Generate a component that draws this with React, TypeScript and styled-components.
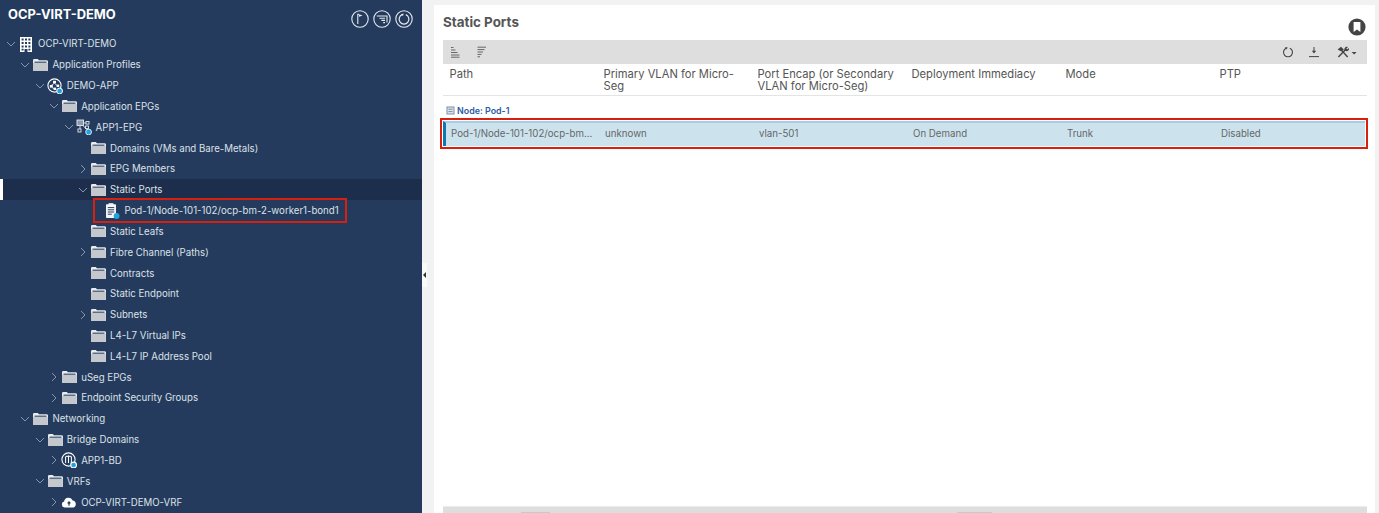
import React from "react";
import styled, { createGlobalStyle } from "styled-components";

const GlobalStyle = createGlobalStyle`
  html, body { margin: 0; padding: 0; height: 100%; overflow: hidden; }
  body { font-family: "Inter", "Liberation Sans", sans-serif; background: #f2f2f2; }
`;

const Page = styled.div`
  display: flex;
  width: 1379px;
  height: 513px;
  overflow: hidden;
`;

/* Sidebar */
const Sidebar = styled.aside`
  width: 422px;
  flex: none;
  background: #243b5e;
  overflow: hidden;
`;

const SidebarHead = styled.header`
  display: flex;
  justify-content: space-between;
  height: 33.5px;
  padding: 0 9px 0 8px;
`;

const SidebarTitle = styled.h2`
  margin: 7px 0 0;
  font-size: 12.9px;
  line-height: 16px;
  font-weight: 700;
  color: #fff;
`;

const HeadIcons = styled.div`
  display: flex;
  gap: 4px;
  padding-top: 10px;
  height: 18px;
`;

const Row = styled.div<{ $level: number; $selected?: boolean }>`
  position: relative;
  display: flex;
  align-items: center;
  height: 20.83px;
  padding-left: ${(p) => 4 + p.$level * 14.4}px;
  background: ${(p) => (p.$selected ? "#1c2e4c" : "transparent")};
  box-shadow: ${(p) => (p.$selected ? "inset 3px 0 0 #fff" : "none")};
`;

const Chevron = styled.span`
  display: flex;
  align-items: center;
  justify-content: center;
  flex: none;
  width: 14px;
`;

const NodeIcon = styled.span`
  display: flex;
  align-items: center;
  justify-content: center;
  flex: none;
  width: 16px;
  height: 16px;
`;

const NodeLabel = styled.span`
  margin-left: 4px;
  font-size: 9.66px;
  color: #dde1e7;
  white-space: nowrap;
`;

const RedFrame = styled.div`
  position: absolute;
  left: 93px;
  top: -2px;
  width: 254px;
  height: 25px;
  box-sizing: border-box;
  border: 2px solid #d8200f;
`;

/* Splitter between the tree and the panel */
const Splitter = styled.div`
  position: relative;
  width: 12px;
  flex: none;
  background: #f2f2f2;
`;

const SplitHandle = styled.div`
  position: absolute;
  left: 0;
  top: 263px;
  width: 5px;
  height: 24px;
  background: #fafafa;
  display: flex;
  align-items: center;
  justify-content: center;

  &::after {
    content: "";
    border-top: 3px solid transparent;
    border-bottom: 3px solid transparent;
    border-right: 3px solid #333;
  }
`;

/* Right panel */
const Panel = styled.main`
  display: flex;
  flex-direction: column;
  width: 941px;
  flex: none;
  margin-top: 5px;
  padding: 0 8px 0 9px;
  box-sizing: border-box;
  background: #fff;
`;

const PanelHead = styled.div`
  position: relative;
  height: 35px;
`;

const PanelTitle = styled.h1`
  margin: 0;
  padding-top: 9px;
  font-size: 13.4px;
  line-height: 16px;
  font-weight: 700;
  color: #555;
`;

const Bookmark = styled.span`
  position: absolute;
  right: 1px;
  top: 13px;
  display: flex;
`;

const Toolbar = styled.div`
  display: flex;
  align-items: center;
  justify-content: space-between;
  height: 24px;
  padding: 0 9px 0 7px;
  background: #dedede;
`;

const ToolGroup = styled.div<{ $gap: number }>`
  display: flex;
  align-items: center;
  gap: ${(p) => p.$gap}px;
`;

const Columns = styled.div`
  display: grid;
  grid-template-columns: repeat(6, 154px);
`;

const HeadRow = styled(Columns)`
  height: 32px;
  box-sizing: border-box;
  padding: 4px 0 0 6.5px;
  border-bottom: 1px solid #e4e4e4;
`;

const HeadCell = styled.div`
  padding-right: 6px;
  font-size: 11.2px;
  line-height: 12px;
  color: #555;
`;

const GroupLabel = styled.div`
  display: flex;
  align-items: center;
  gap: 2px;
  height: 25px;
  box-sizing: border-box;
  padding: 4px 0 0 3px;
  font-size: 8.9px;
  font-weight: 600;
  color: #2c5ba3;
`;

const DataRow = styled(Columns)`
  align-items: center;
  height: 25px;
  margin-right: 2px;
  box-sizing: border-box;
  padding: 0 0 2px 5px;
  border-left: 3px solid #0d78b3;
  border-top: 2px solid #a9cbe3;
  background: #cce3ee;
  outline: 2px solid #d8200f;
  outline-offset: 1px;
`;

const DataCell = styled.div`
  font-size: 9.7px;
  color: #666;
  white-space: nowrap;
`;

const ScrollTrack = styled.div`
  position: relative;
  margin-top: auto;
  height: 6px;
  border-top: 1px solid #ececec;
  background: #dedede;
`;

const ScrollThumb = styled.span<{ $left: number; $width: number }>`
  position: absolute;
  bottom: 0;
  left: ${(p) => p.$left}px;
  width: ${(p) => p.$width}px;
  height: 1px;
  background: #c8c8c8;
`;

/* Icons */
const ChevronIcon = ({ open }: { open: boolean }) => (
  <svg width="10" height="10" viewBox="0 0 10 10" fill="none" stroke="#8795aa" strokeWidth="1">
    <path d={open ? "M1 3l4 4 4-4" : "M3 1l4 4-4 4"} />
  </svg>
);

const Badge = () => <circle cx="12.6" cy="13" r="2.9" fill="#23a3dc" />;

const FolderIcon = () => (
  <svg width="16" height="14" viewBox="0 0 16 14">
    <path d="M1 2.4C1 1.6 1.5 1 2.2 1h3.6l1.2 1.3h7.6c.8 0 1.4.6 1.4 1.3V13H1z" fill="#e9ebee" />
    <rect x="1" y="5" width="14.8" height="8" fill="#c4c7cc" />
    <rect x="2.5" y="3.6" width="12" height="1.2" fill="#39506f" />
  </svg>
);

const BuildingIcon = () => (
  <svg width="14" height="16" viewBox="0 0 14 16">
    <path
      fillRule="evenodd"
      fill="#fff"
      d="M1 1h12v15H8.5v-3h-3v3H1zM2.6 2.6v2h2v-2zm3.4 0v2h2v-2zm3.4 0v2h2v-2zM2.6 6v2h2V6zM6 6v2h2V6zm3.4 0v2h2V6zM2.6 9.4v2h2v-2zM6 9.4v2h2v-2zm3.4 0v2h2v-2zM2.6 12.8v1.6h2v-1.6zm6.8 0v1.6h2v-1.6z"
    />
  </svg>
);

const AppIcon = () => (
  <svg width="16" height="16" viewBox="0 0 16 16" fill="none" stroke="#fff">
    <circle cx="7.5" cy="7.5" r="6.6" strokeWidth="1.1" />
    <rect x="6" y="2.8" width="3" height="2.6" fill="#fff" stroke="none" />
    <rect x="2.8" y="7" width="3" height="2.6" fill="#fff" stroke="none" />
    <rect x="6.6" y="9.6" width="2.6" height="2.4" fill="#fff" stroke="none" />
    <path d="M7.5 5.4L4.5 7M7.5 5.4l3 2.4M5 9.6l2 1" strokeWidth="0.7" />
    <rect x="9.6" y="6.6" width="2.6" height="2.4" fill="#fff" stroke="none" />
    <Badge />
  </svg>
);

const EpgIcon = () => (
  <svg width="16" height="16" viewBox="0 0 16 16" fill="none" stroke="#e6e9ee" strokeWidth="0.9">
    <rect x="1" y="1" width="6.5" height="5.5" fill="#8c99ad" />
    <rect x="10" y="2.5" width="3" height="2.6" />
    <rect x="2" y="10" width="3" height="3" />
    <path d="M7.5 4h2.5M4 6.5V10M7 6.5l3.5 4" />
    <rect x="9.5" y="7" width="3" height="2.6" />
    <Badge />
  </svg>
);

const PortDocIcon = () => (
  <svg width="16" height="16" viewBox="0 0 16 16">
    <rect x="2" y="1.2" width="10" height="13.8" rx="0.8" fill="#f4f5f7" />
    <rect x="4.6" y="0.2" width="4.8" height="2" fill="#f4f5f7" />
    <path d="M3.8 4.6h6.4M3.8 6.8h6.4M3.8 9h6.4M3.8 11.2h4" stroke="#2a3f60" strokeWidth="1" />
    <Badge />
  </svg>
);

const BridgeIcon = () => (
  <svg width="16" height="16" viewBox="0 0 16 16" fill="none" stroke="#fff" strokeWidth="1.1">
    <circle cx="7.5" cy="7.5" r="6.6" />
    <path d="M4.6 11V4.6M7.5 11V3.4M10.4 11V4.6M4.6 5.6a1.45 1.45 0 0 1 2.9 0a1.45 1.45 0 0 1 2.9 0" strokeWidth="1" />
    <Badge />
  </svg>
);

const CloudIcon = () => (
  <svg width="16" height="12" viewBox="0 0 16 12">
    <path
      fill="#fff"
      d="M3.6 11.4A3 3 0 0 1 3.1 5.5 4.4 4.4 0 0 1 11.6 4.6 3.5 3.5 0 0 1 12.4 11.4z"
    />
    <path d="M8 9.8V6.2M6.6 7.4L8 5.8l1.4 1.6" fill="none" stroke="#243b5e" strokeWidth="1.2" />
  </svg>
);

const CircleFlag = () => (
  <svg width="18" height="18" viewBox="0 0 18 18" fill="none" stroke="#e8ebef" strokeWidth="1.1">
    <circle cx="9" cy="9" r="8.2" />
    <path d="M6.8 14V4.2h1.2" />
    <path d="M8 4.2l3.6 1.4L8 6.8z" fill="#e8ebef" stroke="none" />
  </svg>
);

const CircleFilter = () => (
  <svg width="18" height="18" viewBox="0 0 18 18" fill="none" stroke="#e8ebef" strokeWidth="1.1">
    <circle cx="9" cy="9" r="8.2" />
    <path d="M3.8 6h10.2v6.6M6.4 8.2H12M8.4 10.4H12M10.2 12.6H12" />
  </svg>
);

const CircleRefresh = () => (
  <svg width="18" height="18" viewBox="0 0 18 18" fill="none" stroke="#e8ebef" strokeWidth="1.1">
    <circle cx="9" cy="9" r="8.2" />
    <path d="M7.2 4.6a4.9 4.9 0 1 0 3.6 0" strokeWidth="1.2" />
    <path d="M6 4.2l2.6-.8-.6 2.6z" fill="#e8ebef" stroke="none" />
  </svg>
);

const BookmarkIcon = () => (
  <svg width="18" height="18" viewBox="0 0 18 18">
    <circle cx="9" cy="9" r="8.6" fill="#444" />
    <path d="M5.6 4h6.8v10L9 11.4 5.6 14z" fill="#fff" />
  </svg>
);

const SortAscIcon = () => (
  <svg width="12" height="12" viewBox="0 0 12 12" stroke="#666" strokeWidth="1">
    <path d="M1 1.5h2.5M1 4h4.5M1 6.5h6.5M1 9h8.5M1 11.2h8.5" />
  </svg>
);

const SortDescIcon = () => (
  <svg width="12" height="12" viewBox="0 0 12 12" stroke="#666" strokeWidth="1">
    <path d="M1.5 1.2h8.5M1.5 3.6h7M1.5 6h5.5M1.5 8.4h4M1.5 10.8h2.5" />
  </svg>
);

const RefreshIcon = () => (
  <svg width="12" height="12" viewBox="0 0 12 12" fill="none" stroke="#444" strokeWidth="1.1">
    <path d="M4.2 2.2a4.5 4.5 0 1 0 3.6 0" />
    <path d="M3 1l2.8.4-1.4 2z" fill="#444" stroke="none" />
  </svg>
);

const DownloadIcon = () => (
  <svg width="12" height="12" viewBox="0 0 12 12" fill="none" stroke="#444" strokeWidth="1">
    <path d="M6 1v5.2" />
    <path d="M3.8 4.8h4.4L6 7.4z" fill="#444" stroke="none" />
    <path d="M1 10.6h10" />
  </svg>
);

const ToolsIcon = () => (
  <svg width="22" height="12" viewBox="0 0 22 12" fill="none" stroke="#444" strokeWidth="1.4">
    {/* hammer */}
    <path d="M11.6 11L5 3.6" />
    <path d="M1.6 3.4L5 .8l2.8 2.6-2.4 2.2z" fill="#444" stroke="none" />
    {/* wrench */}
    <path d="M2.4 11l7.2-7.4" />
    <path d="M8.6 4.4a2.6 2.6 0 0 1 .8-3.2c.8-.6 1.8-.6 2.6-.2L10.4 2.6l.8.9 1.6-1.5c.4.9.2 2-.5 2.6-.8.7-2 .8-2.9.2z" fill="#444" stroke="none" />
    {/* caret */}
    <path d="M15.6 6h5l-2.5 2.6z" fill="#444" stroke="none" />
  </svg>
);

const CollapseBox = () => (
  <svg width="9" height="9" viewBox="0 0 9 9" fill="none" stroke="#7c8da8" strokeWidth="1">
    <rect x="1" y="1" width="7" height="7" fill="#dfe6ef" />
    <path d="M2.4 3.2h4.2M2.4 5.6h4.2" />
  </svg>
);

type IconKind = "folder" | "building" | "app" | "epg" | "port" | "bridge" | "cloud";

const icons: Record<IconKind, React.ReactNode> = {
  folder: <FolderIcon />,
  building: <BuildingIcon />,
  app: <AppIcon />,
  epg: <EpgIcon />,
  port: <PortDocIcon />,
  bridge: <BridgeIcon />,
  cloud: <CloudIcon />,
};

type TreeNode = {
  label: string;
  level: number;
  icon: IconKind;
  open?: boolean;
  selected?: boolean;
  framed?: boolean;
};

const tree: TreeNode[] = [
  { label: "OCP-VIRT-DEMO", level: 0, icon: "building", open: true },
  { label: "Application Profiles", level: 1, icon: "folder", open: true },
  { label: "DEMO-APP", level: 2, icon: "app", open: true },
  { label: "Application EPGs", level: 3, icon: "folder", open: true },
  { label: "APP1-EPG", level: 4, icon: "epg", open: true },
  { label: "Domains (VMs and Bare-Metals)", level: 5, icon: "folder" },
  { label: "EPG Members", level: 5, icon: "folder", open: false },
  { label: "Static Ports", level: 5, icon: "folder", open: true, selected: true },
  { label: "Pod-1/Node-101-102/ocp-bm-2-worker1-bond1", level: 6, icon: "port", framed: true },
  { label: "Static Leafs", level: 5, icon: "folder" },
  { label: "Fibre Channel (Paths)", level: 5, icon: "folder", open: false },
  { label: "Contracts", level: 5, icon: "folder" },
  { label: "Static Endpoint", level: 5, icon: "folder" },
  { label: "Subnets", level: 5, icon: "folder", open: false },
  { label: "L4-L7 Virtual IPs", level: 5, icon: "folder" },
  { label: "L4-L7 IP Address Pool", level: 5, icon: "folder" },
  { label: "uSeg EPGs", level: 3, icon: "folder", open: false },
  { label: "Endpoint Security Groups", level: 3, icon: "folder", open: false },
  { label: "Networking", level: 1, icon: "folder", open: true },
  { label: "Bridge Domains", level: 2, icon: "folder", open: true },
  { label: "APP1-BD", level: 3, icon: "bridge", open: false },
  { label: "VRFs", level: 2, icon: "folder", open: true },
  { label: "OCP-VIRT-DEMO-VRF", level: 3, icon: "cloud", open: false },
];

const columns = [
  "Path",
  "Primary VLAN for Micro-Seg",
  "Port Encap (or Secondary VLAN for Micro-Seg)",
  "Deployment Immediacy",
  "Mode",
  "PTP",
];

const App = () => {
  return (
    <Page>
      <GlobalStyle />
      <Sidebar>
        <SidebarHead>
          <SidebarTitle>OCP-VIRT-DEMO</SidebarTitle>
          <HeadIcons>
            <CircleFlag />
            <CircleFilter />
            <CircleRefresh />
          </HeadIcons>
        </SidebarHead>
        {tree.map((node) => (
          <Row key={node.label} $level={node.level} $selected={node.selected}>
            <Chevron>{node.open !== undefined && <ChevronIcon open={node.open} />}</Chevron>
            <NodeIcon>{icons[node.icon]}</NodeIcon>
            <NodeLabel>{node.label}</NodeLabel>
            {node.framed && <RedFrame />}
          </Row>
        ))}
      </Sidebar>

      <Splitter>
        <SplitHandle />
      </Splitter>

      <Panel>
        <PanelHead>
          <PanelTitle>Static Ports</PanelTitle>
          <Bookmark>
            <BookmarkIcon />
          </Bookmark>
        </PanelHead>

        <Toolbar>
          <ToolGroup $gap={14}>
            <SortAscIcon />
            <SortDescIcon />
          </ToolGroup>
          <ToolGroup $gap={16}>
            <ToolGroup $gap={14}>
              <RefreshIcon />
              <DownloadIcon />
            </ToolGroup>
            <ToolsIcon />
          </ToolGroup>
        </Toolbar>

        <HeadRow>
          {columns.map((c) => (
            <HeadCell key={c}>{c}</HeadCell>
          ))}
        </HeadRow>

        <GroupLabel>
          <CollapseBox />
          Node: Pod-1
        </GroupLabel>

        <DataRow>
          <DataCell>Pod-1/Node-101-102/ocp-bm...</DataCell>
          <DataCell>unknown</DataCell>
          <DataCell>vlan-501</DataCell>
          <DataCell>On Demand</DataCell>
          <DataCell>Trunk</DataCell>
          <DataCell>Disabled</DataCell>
        </DataRow>

        <ScrollTrack>
          <ScrollThumb $left={78} $width={29} />
          <ScrollThumb $left={514} $width={35} />
        </ScrollTrack>
      </Panel>
    </Page>
  );
};

export default App;
